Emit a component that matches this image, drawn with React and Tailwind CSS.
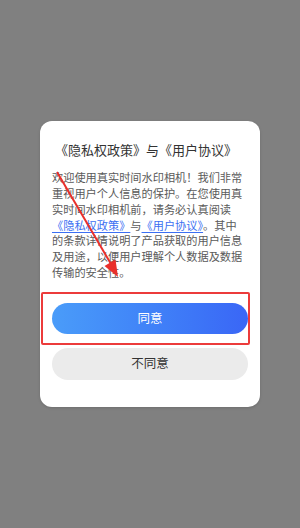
import React from 'react';

const lines = [
  '欢迎使用真实时间水印相机！我们非常',
  '重视用户个人信息的保护。在您使用真',
  '实时间水印相机前，请务必认真阅读',
];

const tailLines = [
  '的条款详情说明了产品获取的用户信息',
  '及用途，以便用户理解个人数据及数据',
  '传输的安全性。',
];

const App = () => {
  return (
    <div
      className="w-[300px] h-[528px] bg-[#808080] flex items-center justify-center"
      style={{ fontFamily: '"Noto Sans CJK SC", "Noto Sans", sans-serif' }}
    >
      <div className="relative w-[220px] bg-white rounded-[12px] px-3 pt-[20px] pb-[27px] shadow-[0_1px_3px_rgba(0,0,0,0.15)]">
        <h2 className="pl-[3px] text-[13px] leading-[18px] text-[#333333] whitespace-nowrap">
          《隐私权政策》与《用户协议》
        </h2>

        <div className="mt-[11px] text-[11.2px] leading-[15.8px] text-[#5a5a5a] whitespace-nowrap">
          {lines.map((l) => (
            <div key={l}>{l}</div>
          ))}
          <div>
            <span className="text-[#3b6ff2] underline underline-offset-2">《隐私权政策》</span>
            与
            <span className="text-[#3b6ff2] underline underline-offset-2">《用户协议》</span>
            。其中
          </div>
          {tailLines.map((l) => (
            <div key={l}>{l}</div>
          ))}
        </div>

        <div className="mt-[22px] flex flex-col gap-[14px]">
          <button className="h-[31px] w-full rounded-full bg-gradient-to-r from-[#4a9cf9] to-[#3a66f6] text-white text-[12.5px]">
            同意
          </button>
          <button className="h-[32px] w-full rounded-full bg-[#ebebeb] text-[#333333] text-[12.5px]">
            不同意
          </button>
        </div>

        {/* red highlight box */}
        <div className="absolute left-[1px] top-[171px] w-[209px] h-[53px] border-2 border-[#ec3b3b] rounded-[2px] pointer-events-none" />

        {/* red arrow */}
        <svg className="absolute left-0 top-0 pointer-events-none" width="220" height="286" viewBox="0 0 220 286">
          <line x1="17" y1="51" x2="71" y2="143" stroke="#e9302b" strokeWidth="2" />
          <polygon points="78,156 75.5,138.5 64.5,145" fill="#e9302b" />
        </svg>
      </div>
    </div>
  );
};

export default App;
